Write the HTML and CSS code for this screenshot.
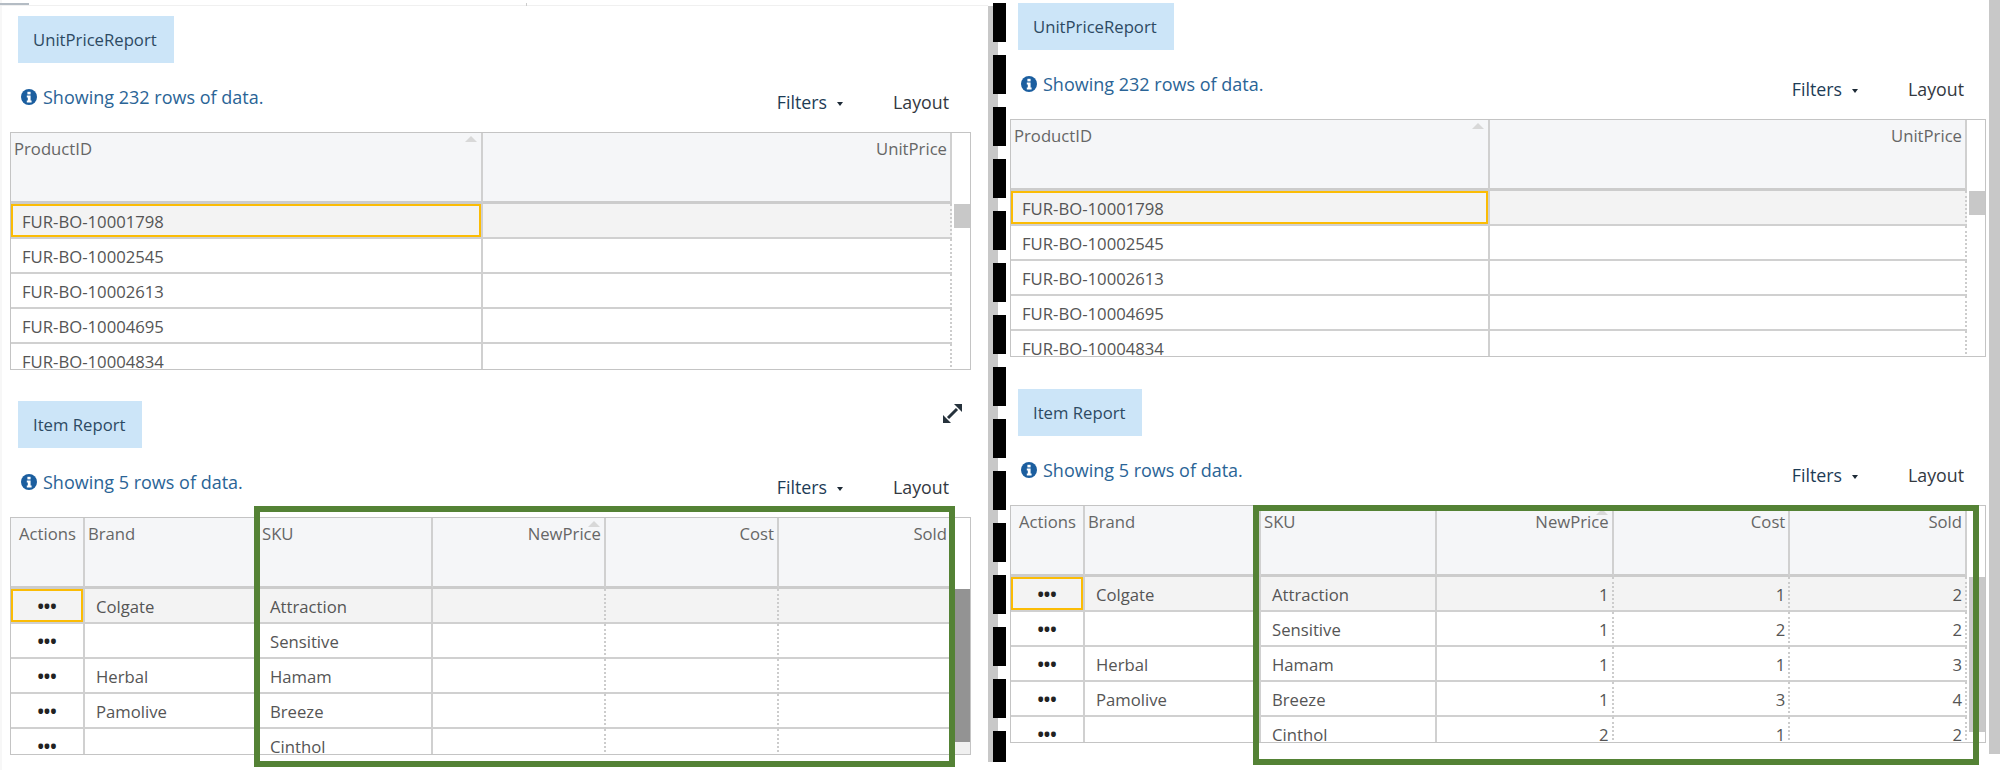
FILE: index.html
```html
<!DOCTYPE html>
<html lang="en">
<head>
    <meta charset="UTF-8">
    <title>Report comparison</title>
    <link rel="stylesheet" href="styles.css">
</head>
<body>
    <div class="page">
        <div class="panel panel-left">
            <div class="tabline"><span class="tabline-mark"></span><span class="tabline-tick"></span></div>

            <section class="report">
                <div class="report-head"><h2 class="report-title">UnitPriceReport</h2></div>
                <div class="toolbar">
                    <p class="info">
                        <svg class="info-icon" viewBox="0 0 16 16"><circle cx="8" cy="8" r="8"/><rect class="i" x="6.4" y="2.8" width="3.2" height="2.6"/><path class="i" d="M5.8 6.6h3.8v5h1v1.8H5.8v-1.800h1v-3.200h-1z"/></svg>
                        Showing 232 rows of data.
                    </p>
                    <div class="toolbar-actions">
                        <span class="filters">Filters<i class="caret"></i></span>
                        <span class="layout">Layout</span>
                    </div>
                </div>
                <div class="grid">
                    <div class="grid-main">
                        <table class="table">
                            <colgroup><col class="col-product"><col></colgroup>
                            <thead>
                                <tr><th>ProductID<i class="sort"></i></th><th class="num">UnitPrice</th></tr>
                            </thead>
                            <tbody>
                                <tr class="current"><td class="selected">FUR-BO-10001798</td><td class="num"></td></tr>
                                <tr><td>FUR-BO-10002545</td><td class="num"></td></tr>
                                <tr><td>FUR-BO-10002613</td><td class="num"></td></tr>
                                <tr><td>FUR-BO-10004695</td><td class="num"></td></tr>
                                <tr><td>FUR-BO-10004834</td><td class="num"></td></tr>
                            </tbody>
                        </table>
                    </div>
                    <div class="grid-scroll"><div class="grid-scroll-head"></div><div class="thumb thumb-small"></div></div>
                </div>
            </section>

            <section class="report">
                <div class="report-head">
                    <h2 class="report-title">Item Report</h2>
                    <svg class="expand" viewBox="0 0 19 19"><path d="M11 0h8v8zM0 11v8h8z"/><path class="expand-line" d="M5 14 14 5"/></svg>
                </div>
                <div class="toolbar">
                    <p class="info">
                        <svg class="info-icon" viewBox="0 0 16 16"><circle cx="8" cy="8" r="8"/><rect class="i" x="6.4" y="2.8" width="3.2" height="2.6"/><path class="i" d="M5.8 6.6h3.8v5h1v1.8H5.8v-1.800h1v-3.200h-1z"/></svg>
                        Showing 5 rows of data.
                    </p>
                    <div class="toolbar-actions">
                        <span class="filters">Filters<i class="caret"></i></span>
                        <span class="layout">Layout</span>
                    </div>
                </div>
                <div class="grid">
                    <div class="grid-main">
                        <table class="table">
                            <colgroup><col class="col-actions"><col class="col-text"><col class="col-text"><col><col><col></colgroup>
                            <thead>
                                <tr><th class="th-actions">Actions</th><th>Brand</th><th>SKU</th><th class="num">NewPrice<i class="sort"></i></th><th class="num">Cost</th><th class="num">Sold</th></tr>
                            </thead>
                            <tbody>
                                <tr class="current"><td class="dots selected">•••</td><td>Colgate</td><td>Attraction</td><td class="num"></td><td class="num"></td><td class="num"></td></tr>
                                <tr><td class="dots">•••</td><td></td><td>Sensitive</td><td class="num"></td><td class="num"></td><td class="num"></td></tr>
                                <tr><td class="dots">•••</td><td>Herbal</td><td>Hamam</td><td class="num"></td><td class="num"></td><td class="num"></td></tr>
                                <tr><td class="dots">•••</td><td>Pamolive</td><td>Breeze</td><td class="num"></td><td class="num"></td><td class="num"></td></tr>
                                <tr><td class="dots">•••</td><td></td><td>Cinthol</td><td class="num"></td><td class="num"></td><td class="num"></td></tr>
                            </tbody>
                        </table>
                    </div>
                    <div class="grid-scroll"><div class="grid-scroll-head"></div><div class="thumb thumb-full"></div></div>
                </div>
            </section>

            <div class="highlight"></div>
        </div>

        <div class="divider"></div>

        <div class="panel panel-right">
            <section class="report">
                <div class="report-head"><h2 class="report-title">UnitPriceReport</h2></div>
                <div class="toolbar">
                    <p class="info">
                        <svg class="info-icon" viewBox="0 0 16 16"><circle cx="8" cy="8" r="8"/><rect class="i" x="6.4" y="2.8" width="3.2" height="2.6"/><path class="i" d="M5.8 6.6h3.8v5h1v1.8H5.8v-1.800h1v-3.200h-1z"/></svg>
                        Showing 232 rows of data.
                    </p>
                    <div class="toolbar-actions">
                        <span class="filters">Filters<i class="caret"></i></span>
                        <span class="layout">Layout</span>
                    </div>
                </div>
                <div class="grid">
                    <div class="grid-main">
                        <table class="table">
                            <colgroup><col class="col-product"><col></colgroup>
                            <thead>
                                <tr><th>ProductID<i class="sort"></i></th><th class="num">UnitPrice</th></tr>
                            </thead>
                            <tbody>
                                <tr class="current"><td class="selected">FUR-BO-10001798</td><td class="num"></td></tr>
                                <tr><td>FUR-BO-10002545</td><td class="num"></td></tr>
                                <tr><td>FUR-BO-10002613</td><td class="num"></td></tr>
                                <tr><td>FUR-BO-10004695</td><td class="num"></td></tr>
                                <tr><td>FUR-BO-10004834</td><td class="num"></td></tr>
                            </tbody>
                        </table>
                    </div>
                    <div class="grid-scroll"><div class="grid-scroll-head"></div><div class="thumb thumb-small"></div></div>
                </div>
            </section>

            <section class="report">
                <div class="report-head"><h2 class="report-title">Item Report</h2></div>
                <div class="toolbar">
                    <p class="info">
                        <svg class="info-icon" viewBox="0 0 16 16"><circle cx="8" cy="8" r="8"/><rect class="i" x="6.4" y="2.8" width="3.2" height="2.6"/><path class="i" d="M5.8 6.6h3.8v5h1v1.8H5.8v-1.800h1v-3.200h-1z"/></svg>
                        Showing 5 rows of data.
                    </p>
                    <div class="toolbar-actions">
                        <span class="filters">Filters<i class="caret"></i></span>
                        <span class="layout">Layout</span>
                    </div>
                </div>
                <div class="grid">
                    <div class="grid-main">
                        <table class="table">
                            <colgroup><col class="col-actions"><col class="col-text"><col class="col-text"><col><col><col></colgroup>
                            <thead>
                                <tr><th class="th-actions">Actions</th><th>Brand</th><th>SKU</th><th class="num">NewPrice<i class="sort"></i></th><th class="num">Cost</th><th class="num">Sold</th></tr>
                            </thead>
                            <tbody>
                                <tr class="current"><td class="dots selected">•••</td><td>Colgate</td><td>Attraction</td><td class="num">1</td><td class="num">1</td><td class="num">2</td></tr>
                                <tr><td class="dots">•••</td><td></td><td>Sensitive</td><td class="num">1</td><td class="num">2</td><td class="num">2</td></tr>
                                <tr><td class="dots">•••</td><td>Herbal</td><td>Hamam</td><td class="num">1</td><td class="num">1</td><td class="num">3</td></tr>
                                <tr><td class="dots">•••</td><td>Pamolive</td><td>Breeze</td><td class="num">1</td><td class="num">3</td><td class="num">4</td></tr>
                                <tr><td class="dots">•••</td><td></td><td>Cinthol</td><td class="num">2</td><td class="num">1</td><td class="num">2</td></tr>
                            </tbody>
                        </table>
                    </div>
                    <div class="grid-scroll"><div class="grid-scroll-head"></div><div class="thumb thumb-full"></div></div>
                </div>
            </section>

            <div class="highlight"></div>
        </div>

        <div class="edge"></div>
    </div>
</body>
</html>
```

FILE: styles.css
```css
body {
    font-family: "Open Sans", "Liberation Sans", sans-serif;
    font-size: 16.7px;
    background-color: white;
    margin: 0;
    color: #555;
}
.page {
    display: flex;
    height: 770px;
    overflow: hidden;
}
.panel {
    position: relative;
    box-sizing: border-box;
}
.panel-left {
    width: 988px;
    padding: 0 17px 0 8px;
    border-left: 2px solid #f7f7f7;
}
.panel-right {
    flex: 1;
    padding: 3px 3px 0 4px;
}
.panel-right .report {
    margin-bottom: 32px;
}
.tabline {
    display: flex;
    height: 5px;
    margin: 0 -17px 0 -10px;
    border-bottom: 1px solid #f0f0f0;
}
.tabline-mark {
    width: 29px;
    height: 2px;
    margin-top: 3px;
    background-color: #b4bcc4;
}
.tabline-tick {
    width: 1px;
    height: 3px;
    margin: 3px 0 0 497px;
    background-color: #ccc;
}
.divider {
    width: 18px;
    height: 762px;
    background:
        repeating-linear-gradient(#000 0 39px, transparent 39px 52px) 5px 3px / 13px 100% no-repeat,
        linear-gradient(#c8c8c8, #c8c8c8) 0 6px / 10px 100% no-repeat;
}
.edge {
    width: 11px;
    height: 754px;
    background-color: #c8c8c8;
}

/* report header */
.report {
    margin-bottom: 31px;
}
.panel-left .report:first-of-type {
    padding-top: 10px;
}
.report-head {
    display: flex;
    justify-content: space-between;
    padding-left: 8px;
}
.report-title {
    margin: 0;
    padding: 0 17px 0 15px;
    height: 47px;
    line-height: 47px;
    font-size: 16.7px;
    font-weight: normal;
    color: #2d4a63;
    background-color: #cce5f8;
}
.expand {
    width: 19px;
    height: 19px;
    margin: 3px 9px 0 0;
    fill: #26323c;
}
.expand-line {
    stroke: #26323c;
    stroke-width: 3;
}
.toolbar {
    display: flex;
    justify-content: space-between;
    height: 69px;
    box-sizing: border-box;
    padding: 0 22px 0 11px;
}
.info {
    display: flex;
    align-items: center;
    gap: 6px;
    height: 20px;
    margin: 24px 0 0;
    font-size: 18px;
    color: #2a6496;
}
.info-icon {
    width: 16px;
    height: 16px;
    fill: #1b5e9f;
}
.info-icon .i {
    fill: white;
}
.toolbar-actions {
    display: flex;
    align-items: center;
    gap: 50px;
    height: 20px;
    margin-top: 29px;
    font-size: 17.8px;
    color: #1d3c56;
}
.layout {
    color: #33393f;
}
.caret {
    display: inline-block;
    margin-left: 10px;
    vertical-align: 3px;
    border: 3px solid transparent;
    border-top: 4px solid #1d2a36;
    border-bottom: 0;
}

/* grid */
.grid {
    display: flex;
    height: 238px;
    box-sizing: border-box;
    border: 1px solid #c4c4c4;
}
.grid-main {
    flex: 1;
    overflow: hidden;
}
.grid-scroll {
    width: 18px;
    flex: none;
}
.grid-scroll-head {
    height: 71px;
}
.thumb {
    margin-left: 2px;
}
.thumb-small {
    height: 24px;
    background-color: #c8c8c8;
}
.panel-left .thumb-full {
    height: 153px;
    background-color: #939393;
    border-bottom: 12px solid #f0f0f0;
}
.panel-right .thumb-full {
    height: 155px;
    background-color: #c8c8c8;
}
.table {
    width: 100%;
    table-layout: fixed;
    border-collapse: separate;
    border-spacing: 0;
}
.panel-left .col-product {
    width: 472px;
}
.panel-right .col-product {
    width: 479px;
}
.col-actions {
    width: 74px;
}
.panel-left .col-text {
    width: 174px;
}
.panel-right .col-text {
    width: 176px;
}
th, td {
    box-sizing: border-box;
    white-space: nowrap;
    text-align: left;
    border-right: 2px solid #d0d0d0;
}
th {
    position: relative;
    height: 71px;
    padding: 6px 3px 0 3px;
    line-height: 20px;
    vertical-align: top;
    font-weight: normal;
    color: #666;
    background-color: #f5f6f8;
    border-bottom: 3px solid #ccc;
}
.th-actions {
    padding-left: 8px;
}
td {
    height: 35px;
    padding: 2px 3px 0 11px;
    line-height: 14px;
    border-bottom: 2px solid #d0d0d0;
}
.num {
    text-align: right;
}
td.num {
    border-right: 2px dotted #ccc;
}
.dots {
    padding: 2px 0 0;
    text-align: center;
    font-size: 17px;
    font-weight: bold;
    color: #222;
}
.current td {
    background-color: #f3f3f3;
}
.current .selected {
    box-shadow: inset 0 0 0 2px #fbbc05;
}
.sort {
    position: absolute;
    top: 3px;
    right: 4px;
    border: 6px solid transparent;
    border-top: 0;
    border-bottom: 6px solid #d8d8d8;
}

/* green box drawn over the report */
.highlight {
    position: absolute;
    box-sizing: border-box;
    border: 6px solid #548235;
}
.panel-left .highlight {
    left: 252px;
    top: 506px;
    width: 701px;
    height: 261px;
}
.panel-right .highlight {
    left: 247px;
    top: 505px;
    width: 726px;
    height: 260px;
}
```
